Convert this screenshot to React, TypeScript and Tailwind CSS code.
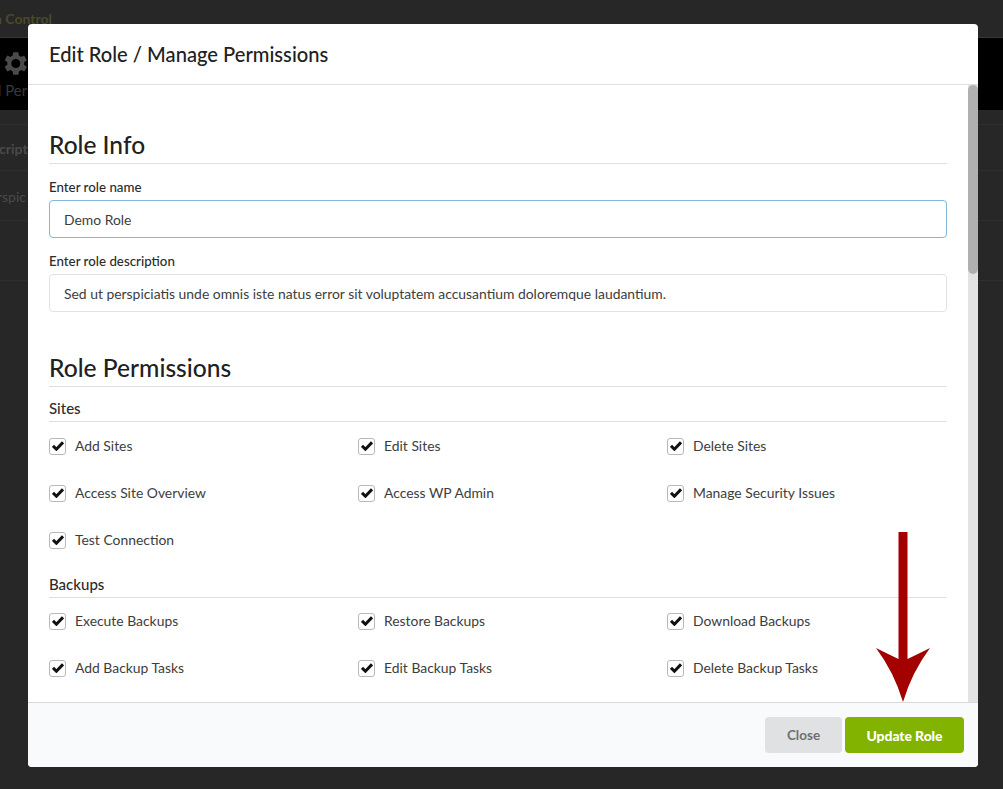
import React from 'react';

const sites = ['Add Sites', 'Edit Sites', 'Delete Sites', 'Access Site Overview', 'Access WP Admin', 'Manage Security Issues', 'Test Connection'];
const backups = ['Execute Backups', 'Restore Backups', 'Download Backups', 'Add Backup Tasks', 'Edit Backup Tasks', 'Delete Backup Tasks', 'Manage Schedules'];

const PermissionGrid = ({ items }: { items: string[] }) => (
  <div className="grid grid-cols-[309px_309px_280px]">
    {items.map(item => (
      <div key={item} className="flex h-[47px] items-center pb-[1px]">
        <span className="flex h-[17px] w-[17px] items-center justify-center rounded-[3px] border border-[#b8b8b8] bg-white">
          <svg viewBox="0 0 12 10" className="h-[10px] w-[12px]">
            <path d="M1 4.8 L4.4 8.2 L11 1.4" fill="none" stroke="#111" strokeWidth="3" />
          </svg>
        </span>
        <span className="ml-[9px] text-[13.9px] text-[#3d3d3d]">{item}</span>
      </div>
    ))}
  </div>
);

const App: React.FC = () => {
  return (
    <div className="relative h-[789px] w-[1003px] overflow-hidden bg-[#272727] font-['Lato','Liberation_Sans',sans-serif]">
      {/* page behind the dimmer */}
      <div className="flex h-[38px] items-center border-b border-[#3a3a1a] text-[14px] text-[#4a4a2a]">
        <span className="ml-[-6px] font-bold">n Control</span>
      </div>
      <div className="flex h-[72px] flex-col bg-black text-[#3a3a3a]">
        <svg viewBox="0 0 24 24" className="ml-[-1px] mt-[10px] h-[31px] w-[31px]" fill="#4a4a4a">
          <path d="M19.4 13a7.6 7.6 0 0 0 0-2l2.1-1.6-2-3.5-2.5 1a7.5 7.5 0 0 0-1.7-1L15 3.2h-4l-.4 2.7a7.5 7.5 0 0 0-1.7 1l-2.5-1-2 3.5L6.5 11a7.6 7.6 0 0 0 0 2l-2.1 1.6 2 3.5 2.5-1a7.5 7.5 0 0 0 1.7 1l.4 2.7h4l.4-2.7a7.5 7.5 0 0 0 1.7-1l2.5 1 2-3.5zM13 15.5a3.5 3.5 0 1 1 0-7 3.5 3.5 0 0 1 0 7z" />
        </svg>
        <span className="ml-[-7px] text-[15px]">d Per</span>
      </div>
      <div className="h-[15px] border-b border-[#2f2f2f]" />
      <div className="flex h-[46px] items-center border-b border-[#2f2f2f] pt-[2px] text-[14px] text-[#4a4a4a]">
        <span className="ml-[-1px] font-bold">cript</span>
      </div>
      <div className="flex h-[50px] items-center border-b border-[#2f2f2f] pt-[2px] text-[14px] text-[#4a4a4a]">
        <span className="ml-[-3px]">rspic</span>
      </div>
      <div className="h-[60px] border-b border-[#2f2f2f]" />

      {/* modal */}
      <div className="absolute left-[28px] top-[24px] flex h-[743px] w-[950px] flex-col overflow-hidden rounded-[4px] bg-white">
        <div className="flex h-[61px] shrink-0 items-center border-b border-[#dfdfdf] pl-[21px] text-[20.15px] font-medium text-[#212121]">
          Edit Role / Manage Permissions
        </div>
        <div className="flex min-h-0 flex-1">
          <div className="min-w-0 flex-1 overflow-hidden pl-[21px] pr-[21px]">
            <h2 className="mt-[43px] border-b border-[#dfdfdf] pb-[2px] text-[24.5px] font-medium leading-[33px] text-[#212121]">Role Info</h2>
            <label className="mt-[14px] block text-[13.3px] font-medium leading-[18px] text-[#2b2b2b]">Enter role name</label>
            <div className="mt-[4px] flex h-[38px] items-center rounded-[4px] border border-[#85b7d9] px-[14px] pt-[2px] text-[13.9px] text-[#3d3d3d]">Demo Role</div>
            <label className="mt-[14px] block text-[13.3px] font-medium leading-[18px] text-[#2b2b2b]">Enter role description</label>
            <div className="mt-[4px] flex h-[38px] items-center rounded-[4px] border border-[#e2e2e2] px-[14px] pt-[2px] text-[13.9px] text-[#3d3d3d]">
              Sed ut perspiciatis unde omnis iste natus error sit voluptatem accusantium doloremque laudantium.
            </div>
            <h2 className="mt-[39px] border-b border-[#dfdfdf] pb-[2px] text-[24.6px] font-medium leading-[33px] text-[#212121]">Role Permissions</h2>
            <h3 className="mt-[12px] border-b border-[#dfdfdf] pb-[4px] text-[15px] font-medium leading-[18px] text-[#2b2b2b]">Sites</h3>
            <div className="mt-[1px]"><PermissionGrid items={sites} /></div>
            <h3 className="mt-[11px] border-b border-[#dfdfdf] pb-[4px] text-[15px] font-medium leading-[18px] text-[#2b2b2b]">Backups</h3>
            <PermissionGrid items={backups} />
          </div>
          <div className="flex w-[10px] shrink-0 bg-[#e3e3e3]">
            <div className="h-[189px] w-[10px] rounded-[5px] bg-[#b0b0b0]" />
          </div>
        </div>
        <div className="flex h-[65px] shrink-0 items-center justify-end border-t border-[#d9d9da] bg-[#f9fafb] pr-[14px]">
          <button className="h-[36px] w-[77px] rounded-[4px] bg-[#e0e1e2] text-[13.5px] font-bold text-[#6f6f6f]">Close</button>
          <button className="ml-[3px] h-[36px] w-[119px] rounded-[4px] bg-[#81b300] text-[14px] font-black tracking-[-0.1px] text-white">Update Role</button>
        </div>
      </div>

      {/* annotation arrow */}
      <svg className="absolute left-[870px] top-[528px] h-[180px] w-[66px]" viewBox="0 0 66 180">
        <path
          d="M28.5 4 H37.5 V131 Q48 126 60 120 Q42 144 33 174 Q24 144 6 120 Q18 126 28.5 131 Z"
          fill="#a30000"
        />
      </svg>
    </div>
  );
};

export default App;
